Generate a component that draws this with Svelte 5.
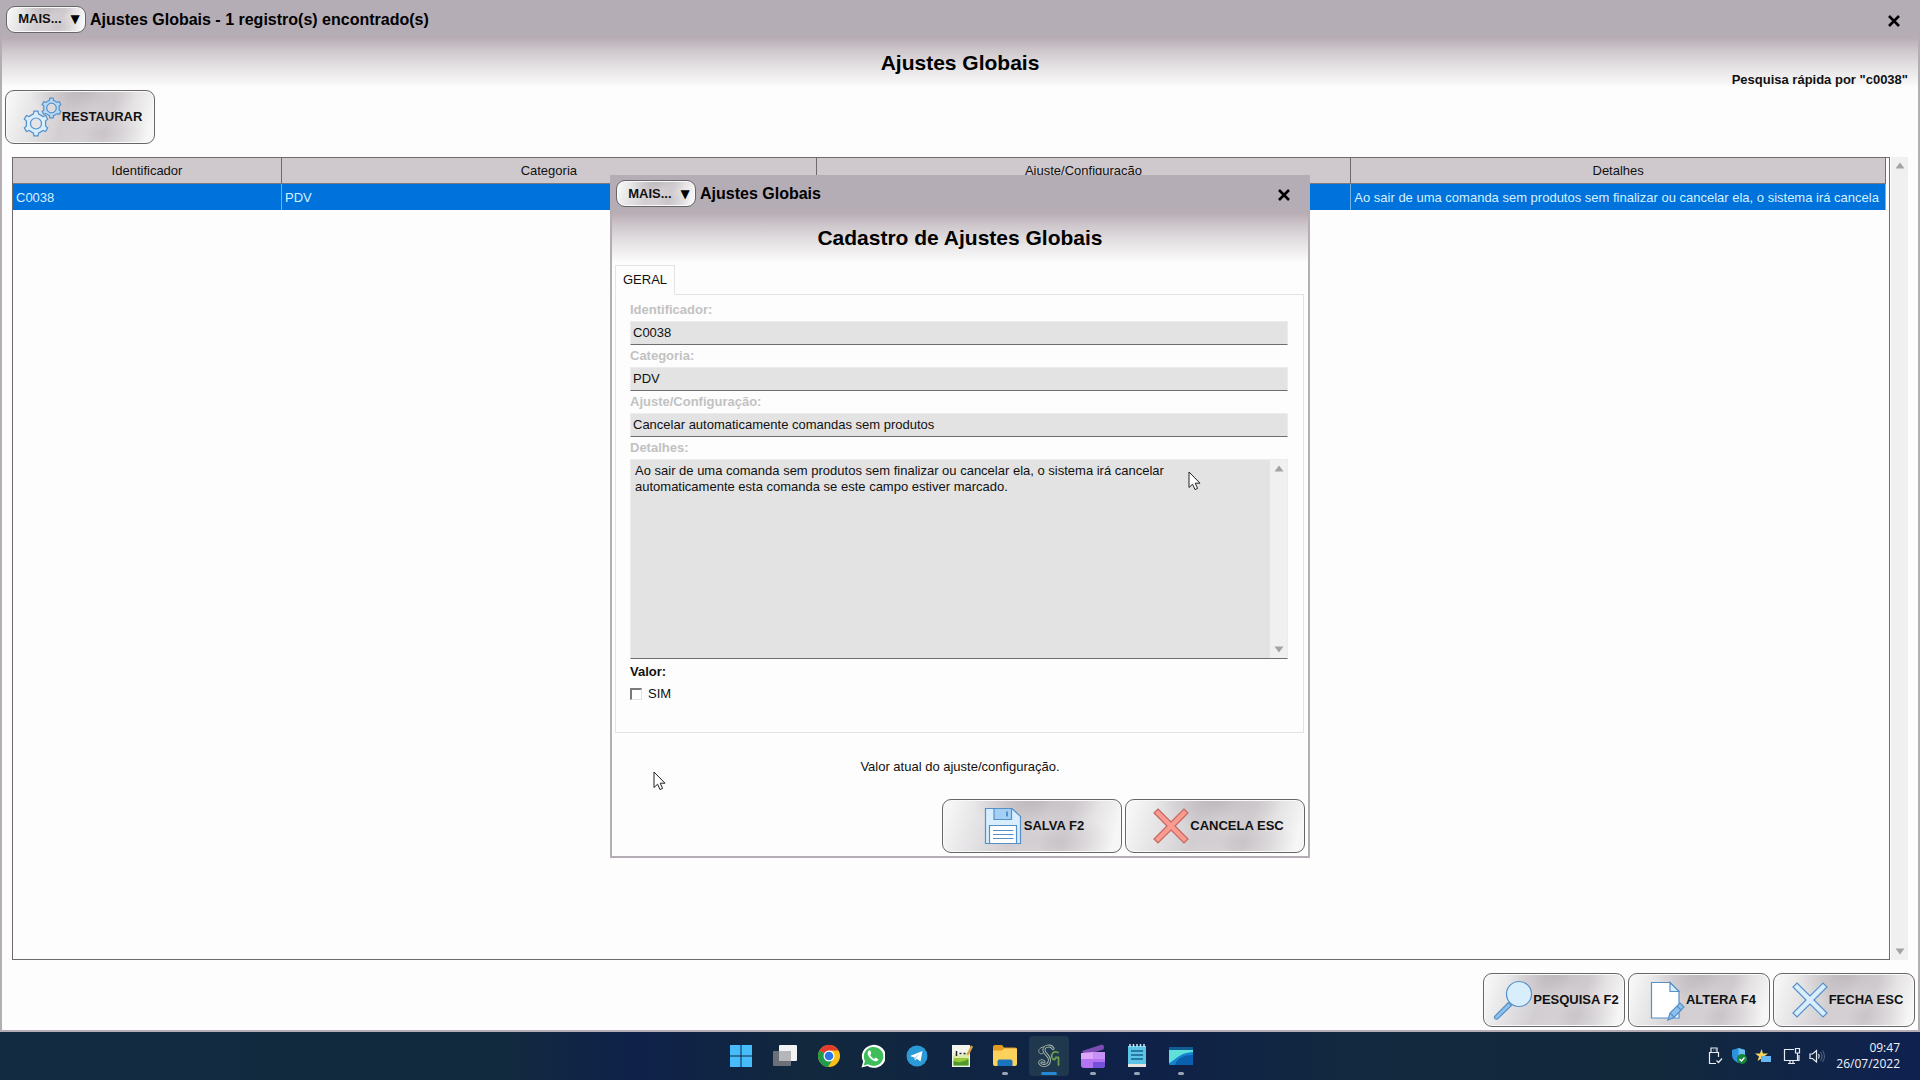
<script lang="ts">
  type Row = { id: string; category: string; setting: string; details: string };

  const columns = ['Identificador', 'Categoria', 'Ajuste/Configuração', 'Detalhes'];

  const rows: Row[] = [
    {
      id: 'C0038',
      category: 'PDV',
      setting: 'Cancelar automaticamente comandas sem produtos',
      details: 'Ao sair de uma comanda sem produtos sem finalizar ou cancelar ela, o sistema irá cancela'
    }
  ];

  const fullDetails =
    'Ao sair de uma comanda sem produtos sem finalizar ou cancelar ela, o sistema irá cancelar automaticamente esta comanda se este campo estiver marcado.';

  const fields = [
    { id: 'identificador', label: 'Identificador:', value: rows[0].id },
    { id: 'categoria', label: 'Categoria:', value: rows[0].category },
    { id: 'ajuste', label: 'Ajuste/Configuração:', value: rows[0].setting }
  ];

  const apps = [
    { name: 'start', state: '' },
    { name: 'taskview', state: '' },
    { name: 'chrome', state: '' },
    { name: 'whatsapp', state: '' },
    { name: 'telegram', state: '' },
    { name: 'notepadpp', state: '' },
    { name: 'explorer', state: 'open' },
    { name: 'sg', state: 'active' },
    { name: 'clipchamp', state: 'open' },
    { name: 'notepad', state: 'open' },
    { name: 'desktop', state: 'open' }
  ];

  let checked = $state(false);

  // outline of a cog: four points per tooth
  function gear(cx: number, cy: number, outer: number, inner: number, teeth = 6) {
    const step = (Math.PI * 2) / teeth;
    const points: string[] = [];
    for (let i = 0; i < teeth; i++) {
      const a = i * step - Math.PI / 2;
      for (const [r, off] of [
        [inner, -0.24],
        [outer, -0.16],
        [outer, 0.16],
        [inner, 0.24]
      ]) {
        const t = a + off * step;
        points.push(`${(cx + r * Math.cos(t)).toFixed(2)} ${(cy + r * Math.sin(t)).toFixed(2)}`);
      }
    }
    return `M${points.join('L')}Z`;
  }
</script>

{#snippet titlebar(title: string)}
  <div class="titlebar">
    <button class="glossy more">MAIS...<span class="caret">▼</span></button>
    <span class="caption">{title}</span>
    <button class="close" aria-label="Fechar">
      <svg width="12" height="12" viewBox="0 0 12 12"><path d="M1 1L11 11M11 1L1 11" stroke="#000" stroke-width="2.6" /></svg>
    </button>
  </div>
{/snippet}

{#snippet scrollbar()}
  <div class="scrollbar">
    <svg width="10" height="7" viewBox="0 0 10 7"><path d="M5 0.5L9.5 6.5H0.5Z" fill="#a3a3a3" /></svg>
    <svg width="10" height="7" viewBox="0 0 10 7"><path d="M5 6.5L9.5 0.5H0.5Z" fill="#a3a3a3" /></svg>
  </div>
{/snippet}

{#snippet cursor(place: string)}
  <svg class="cursor {place}" width="13" height="20" viewBox="0 0 13 20">
    <path d="M1 1V16.5L4.6 13.2L7 18.6L9.6 17.4L7.2 12.2H12Z" fill="#fff" stroke="#222" />
  </svg>
{/snippet}

{#snippet buttonIcon(name: string)}
  <svg class="icon" width="44" height="44" viewBox="0 0 44 44" stroke="#5590c8" stroke-width="1.2" fill="#d9eefc">
    {#if name === 'gears'}
      <path d={gear(33.5, 13, 10, 8)} fill="#b5daf8" />
      <circle cx="33.5" cy="13" r="4.8" fill="#dcdadd" />
      <path d={gear(18, 28.5, 12.5, 10)} />
      <circle cx="18" cy="28.5" r="5.5" fill="#e6e4e6" />
    {:else if name === 'save'}
      <path d="M5.5 4.5H32L40.500 12.5V39.5H5.5Z" />
      <path d="M14 4.5H31.500V15.5H14Z" fill="#a4d0f6" />
      <path d="M27 7.5V12.5" stroke-width="2" />
      <path d="M9.500 39.5V21.5H36.500V39.5Z" fill="#fff" />
      <path d="M13 26.5H33.500M13 30.5H33.500M13 34.5H33.500" />
    {:else if name === 'cancel'}
      <path
        d="M12 5L25 18L38 5L42 9L29 22L42 35L38 39L25 26L12 39L8 35L21 22L8 9Z"
        fill="#fa9a90"
        stroke="#c4675f"
      />
    {:else if name === 'search'}
      <path d="M19.5 24.5L5.5 38.5Q5 41.5 8.5 41L22.5 27.5Z" fill="#8fc0ec" />
      <circle cx="30" cy="16" r="12.5" />
    {:else if name === 'edit'}
      <path d="M9.5 4.5H28L37 13.5V40H9.5Z" fill="#fff" />
      <path d="M28 4.5V13.5H37Z" />
      <path d="M26 42L28 35L38 25L42 29L32 39.5Z" fill="#8fc0ec" />
      <path d="M28 35L32 39M35 28L39 32" fill="none" />
    {:else}
      <path d="M12 5L25 18L38 5L42 9L29 22L42 35L38 39L25 26L12 39L8 35L21 22L8 9Z" />
    {/if}
  </svg>
{/snippet}

{#snippet appIcon(name: string)}
  <svg width="24" height="24" viewBox="0 0 24 24">
    {#if name === 'start'}
      <path d="M1 1H11.5V11.5H1ZM12.5 1H23V11.5H12.5ZM1 12.5H11.5V23H1ZM12.5 12.5H23V23H12.5Z" fill="#46bdfa" />
    {:else if name === 'taskview'}
      <rect x="6" y="1" width="18" height="16" rx="1" fill="#f2f2f4" />
      <rect x="0" y="7" width="18" height="15" rx="1" fill="#6b7078" />
      <rect x="6" y="7" width="12" height="10" fill="#b5b6ba" />
    {:else if name === 'chrome'}
      <circle cx="12" cy="12" r="11" fill="#fbc116" />
      <path d="M12 12L2.5 6.5A11 11 0 0 1 21.5 6.5H12Z" fill="#e33b2e" />
      <path d="M12 12L2.5 6.5A11 11 0 0 0 11 23L16 15Z" fill="#229a4b" />
      <circle cx="12" cy="12" r="5.5" fill="#fff" />
      <circle cx="12" cy="12" r="4.3" fill="#2b75e8" />
    {:else if name === 'whatsapp'}
      <path d="M0.5 23.5L2.2 17.6A12 11.5 0 1 1 6.4 22Z" fill="#fff" />
      <path d="M2.6 21.5L4 17A9.8 9.5 0 1 1 7 20.2Z" fill="#3fbd5b" />
      <path d="M8 6.5C5.5 8.5 7 12 9.5 14.5C12.5 17.5 16 18.5 17.5 15.5L14.8 13.6L13.2 15C11.5 14.3 10 12.7 9.3 11L10.3 9.5L9.3 6.5Z" fill="#fff" />
    {:else if name === 'telegram'}
      <circle cx="12" cy="12" r="10.5" fill="#2a9ad8" />
      <path d="M5 12L17.5 7L15.5 17.5L11.8 14.8L10 16.5L9.5 13.5Z" fill="#fff" />
      <path d="M9.5 13.5L15 9.2L11 14.2L10 16.5Z" fill="#b5d5e8" />
    {:else if name === 'notepadpp'}
      <path d="M3 1H21V23H3Z" fill="#f4f6ee" />
      <path d="M4.5 12H19.5V21.5H4.5Z" fill="#9cc93c" />
      <path d="M4.5 9Q12 15 19.5 7V14H4.5Z" fill="#dcebaa" />
      <path d="M4.5 17Q12 20 19.5 15V21.5H4.5Z" fill="#4f9a2c" />
      <path d="M7.5 7V12M10.5 9.5H12.5M14.5 9.5H16.5" stroke="#222" stroke-width="1.5" />
      <path d="M23 2L18.5 11" stroke="#d9a44a" stroke-width="2.5" />
    {:else if name === 'explorer'}
      <path d="M0 3Q0 1 2 1H9L11 3.5H22Q24 3.5 24 5.5V12H0Z" fill="#e39a22" />
      <path d="M0 6.5H9L11 4.5H24V20Q24 22 22 22H2Q0 22 0 20Z" fill="#fdd25c" />
      <path d="M4.5 22V17.5Q4.5 15.5 6.5 15.5H17.5Q19.500 15.5 19.5 17.5V22Z" fill="#1b72bd" />
    {:else if name === 'sg'}
      <g fill="none" stroke-linecap="round" stroke-linejoin="round">
        <path d="M16 4.5C14 0.500 6.500 1.500 7 6.500C7.500 10.500 13 11.500 12.500 16.500C12 22 5 23 3 19.500C2 17 5.500 15.500 7 18" stroke="#a9b8ae" stroke-width="3" />
        <path d="M16 4.5C14 0.500 6.500 1.500 7 6.500C7.500 10.500 13 11.500 12.500 16.500C12 22 5 23 3 19.500C2 17 5.500 15.500 7 18" stroke="#20384e" stroke-width="1.200" />
        <path d="M6 3C2.500 3.500 0.500 7 2.500 9C4 10.500 6 10 6.500 8.500" stroke="#93a59c" />
        <path d="M21 8.500C16.500 6.500 14 10 15 13.500C16 16.500 18.500 16 18.500 13.500H21.500V21" stroke="#6a9c50" stroke-width="1.800" />
      </g>
    {:else if name === 'clipchamp'}
      <path d="M1 7L21 0.5Q23 0.5 23 3L22.5 5.5L4 11Z" fill="#7d4cb5" />
      <path d="M0 9H24V21Q24 24 21 24H3Q0 24 0 21Z" fill="#b473f0" />
      <path d="M0 9L12 8V15H0Z" fill="#dca6fa" />
      <path d="M12 8H24V15H12Z" fill="#c690f6" />
      <path d="M12 18H24V21Q24 24 21 24H12Z" fill="#7550dd" />
    {:else if name === 'notepad'}
      <path d="M3 2H21V20H3Z" fill="#5cc4e6" />
      <path d="M3 20H21V23H3Z" fill="#e9e4df" />
      <path d="M5 0V3M8.5 0V3M12 0V3M15.5 0V3M19 0V3" stroke="#c9edf7" stroke-width="1.5" />
      <path d="M6 7H18M6 11H18M6 15H18" stroke="#16628f" stroke-width="1.5" />
    {:else}
      <rect x="0" y="3" width="24" height="18" rx="1.5" fill="#1583cf" />
      <path d="M0 19C6 17 9 9 24 8V6H0Z" fill="#5fe0da" />
      <path d="M6 21C8 14 15 11 24 11V21Z" fill="#0a5fae" />
      <rect x="0" y="3" width="24" height="3" rx="1" fill="#0f5f94" />
    {/if}
  </svg>
{/snippet}

<div class="screen">
  <main class="window">
    <header class="head">
      {@render titlebar('Ajustes Globais - 1 registro(s) encontrado(s)')}
      <div class="heading">
        <h1>Ajustes Globais</h1>
        <span class="quick">Pesquisa rápida por "c0038"</span>
      </div>
    </header>

    <div class="toolbar">
      <button class="glossy wide">{@render buttonIcon('gears')}RESTAURAR</button>
    </div>

    <section class="grid-area">
      <div class="frame">
        <table>
          <colgroup>
            <col class="narrow" /><col /><col /><col />
          </colgroup>
          <thead>
            <tr>
              {#each columns as column}
                <th>{column}</th>
              {/each}
            </tr>
          </thead>
          <tbody>
            {#each rows as row}
              <tr>
                <td>{row.id}</td>
                <td>{row.category}</td>
                <td>{row.setting}</td>
                <td>{row.details}</td>
              </tr>
            {/each}
          </tbody>
        </table>
      </div>
      {@render scrollbar()}
    </section>

    <footer class="actions">
      <button class="glossy">{@render buttonIcon('search')}PESQUISA F2</button>
      <button class="glossy">{@render buttonIcon('edit')}ALTERA F4</button>
      <button class="glossy">{@render buttonIcon('close')}FECHA ESC</button>
    </footer>

    <div class="overlay">
      <div class="dialog" role="dialog" aria-labelledby="dialog-title">
        <header class="head">
          {@render titlebar('Ajustes Globais')}
          <div class="heading"><h1 id="dialog-title">Cadastro de Ajustes Globais</h1></div>
        </header>

        <div class="tabs">
          <button class="tab">GERAL</button>
        </div>
        <div class="panel">
          {#each fields as field}
            <label class="disabled" for={field.id}>{field.label}</label>
            <input class="box" id={field.id} type="text" value={field.value} readonly />
          {/each}
          <label class="disabled" for="detalhes">Detalhes:</label>
          <div class="box memo">
            <textarea id="detalhes" readonly value={fullDetails}></textarea>
            {@render scrollbar()}
          </div>
          <span class="label">Valor:</span>
          <label class="check"><input type="checkbox" bind:checked />SIM</label>
        </div>

        <p class="hint">Valor atual do ajuste/configuração.</p>

        <footer class="actions">
          <button class="glossy large">{@render buttonIcon('save')}SALVA F2</button>
          <button class="glossy large">{@render buttonIcon('cancel')}CANCELA ESC</button>
        </footer>

        {@render cursor('in-memo')}
        {@render cursor('in-footer')}
      </div>
    </div>
  </main>

  <nav class="taskbar">
    <div class="apps">
      {#each apps as app}
        <button class="app {app.state}" aria-label={app.name}>{@render appIcon(app.name)}</button>
      {/each}
    </div>
    <div class="tray">
      <svg width="16" height="18" viewBox="0 0 16 18" fill="none" stroke="#e8ecf2" stroke-width="1.2">
        <path d="M4 5V1H10V5M11.5 10V5.5H2.5V16.5H9M6 3H6.5M8 3H8.5" />
        <path d="M9.5 13.5L11.5 15.5L15 11.5" />
      </svg>
      <svg width="16" height="18" viewBox="0 0 16 18">
        <path d="M7.5 1L14 3V8C14 12 11 14.5 7.5 16C4 14.5 1 12 1 8V3Z" fill="#2a93dd" />
        <path d="M7.5 1L14 3V8H7.5Z" fill="#67bdf0" />
        <circle cx="11" cy="12" r="5" fill="#16843a" />
        <path d="M8.5 12L10.5 14L13.5 10.5" fill="none" stroke="#fff" stroke-width="1.3" />
      </svg>
      <svg width="16" height="18" viewBox="0 0 16 18">
        <path d="M6.5 2L8 6.5H13L9 9.5L10.5 14L6.5 11.5L2.5 14L4 9.5L0 6.5H5Z" fill="#f6d560" />
        <rect x="6" y="9" width="10" height="6" fill="#66b6f3" />
      </svg>
      <svg class="network" width="18" height="18" viewBox="0 0 18 18" fill="none" stroke="#e8ecf2" stroke-width="1.2">
        <path d="M11 2.5H1.5V13.5H16V8M5 16.5H12M7 13.5V16.5M10 13.5V16.5M12.5 1.5H16.5V6H12.5ZM14.5 6V13" />
      </svg>
      <svg width="17" height="18" viewBox="0 0 17 18" fill="none" stroke="#e8ecf2" stroke-width="1.2">
        <path d="M1 7V11.5H3.5L7.5 15V3.5L3.5 7Z" />
        <path d="M9.5 7Q11 9.25 9.5 11.5" />
        <path d="M11.5 5Q14.5 9.25 11.5 13.5M13.5 3.5Q17.5 9.25 13.5 15" stroke="#4b5a7a" />
      </svg>
      <div class="clock"><span>09:47</span><span>26/07/2022</span></div>
    </div>
  </nav>
</div>

<style>
  :global(body) {
    margin: 0;
  }

  .screen {
    display: flex;
    flex-direction: column;
    min-height: 100vh;
    font-family: 'Liberation Sans', Arial, sans-serif;
    font-size: 13px;
    line-height: 16px;
    color: #111;
  }

  .screen *,
  .screen *::before {
    box-sizing: border-box;
  }

  button,
  input,
  textarea {
    font: inherit;
    color: inherit;
    margin: 0;
  }

  svg {
    display: block;
    flex: none;
  }

  /* Window frame, shared by the main window and the dialog */
  .window,
  .dialog {
    position: relative;
    display: flex;
    flex-direction: column;
    background: #fdfdfd;
    border: 2px solid #b4adb3;
    border-top: 0;
  }

  .window {
    flex: 1;
  }

  .head {
    margin-bottom: 4px;
    background: linear-gradient(#b5adb5 0, #b5adb5 32px, #b9adb5 38px, #cdc6cb 50px, #e3e0e2 66px, #fdfdfd 88px);
  }

  .titlebar {
    display: flex;
    align-items: center;
    height: 38px;
    padding: 0 16px 0 4px;
  }

  .caption {
    flex: 1;
    padding: 1px 0 0 4px;
    font-size: 16px;
    font-weight: bold;
    color: #000;
  }

  .close {
    padding: 3px 2px 0 0;
    border: 0;
    background: none;
  }

  .heading {
    display: grid;
    grid-template-columns: 1fr auto 1fr;
    height: 50px;
    margin-bottom: -2px;
    padding: 0 10px;
  }

  h1 {
    grid-column: 2;
    align-self: center;
    margin: 0;
    font-size: 21px;
    line-height: 24px;
    font-weight: bold;
    color: #000;
  }

  .quick {
    align-self: end;
    justify-self: end;
    font-weight: bold;
  }

  .glossy {
    display: flex;
    align-items: center;
    justify-content: center;
    width: 142px;
    height: 54px;
    padding: 0;
    border: 1px solid #666;
    border-radius: 9px;
    box-shadow: inset 0 0 0 1px #fafafa;
    font-weight: bold;
    white-space: nowrap;
    background:
      radial-gradient(ellipse 36% 60% at 52% 0, rgba(180, 173, 178, 0.7), rgba(180, 173, 178, 0)),
      radial-gradient(ellipse 32% 50% at 64% 80%, rgba(188, 182, 187, 0.5), rgba(188, 182, 187, 0)),
      linear-gradient(108deg, #f6f6f6 4%, #e2e0e2 24%, #d3cfd2 40%, #dedbdd 56%, #d6d2d5 68%, #f6f6f6 94%);
  }

  .glossy.wide {
    width: 150px;
  }

  .glossy.large {
    width: 180px;
  }

  .glossy.more {
    width: 80px;
    height: 27px;
    gap: 9px;
    padding-left: 6px;
  }

  .caret {
    font-family: 'DejaVu Sans', sans-serif;
    font-size: 12px;
    color: #000;
  }

  .toolbar {
    display: flex;
    padding: 0 3px;
  }

  .grid-area {
    flex: 1;
    display: flex;
    gap: 1px;
    margin: 13px 10px;
  }

  .frame {
    flex: 1;
    min-width: 0;
    padding-right: 3px;
    border: 1px solid #6e6a6e;
  }

  table {
    width: 100%;
    table-layout: fixed;
    border-collapse: separate;
    border-spacing: 0;
  }

  .narrow {
    width: 269px;
  }

  th,
  td {
    height: 26px;
    padding: 1px 3px 0;
    overflow: hidden;
    white-space: nowrap;
    font-weight: normal;
  }

  th {
    background: #cfc9cd;
    border-right: 1px solid #6e6a6e;
    border-bottom: 1px solid #7c787c;
    text-align: center;
  }

  td {
    background: #0072dc;
    border-right: 1px solid #6fb4ea;
    color: #d4f0ff;
  }

  .scrollbar {
    display: flex;
    flex-direction: column;
    align-items: center;
    justify-content: space-between;
    width: 17px;
    padding: 5px 0;
    background: #f0f0f0;
  }

  .actions {
    display: flex;
    justify-content: flex-end;
    gap: 3px;
    padding: 0 3px 3px;
  }

  .overlay {
    position: absolute;
    inset: 0 0 -2px;
    display: flex;
    align-items: center;
    justify-content: center;
  }

  .dialog {
    width: 700px;
  }

  .tabs {
    display: flex;
    padding-left: 3px;
  }

  .tab {
    height: 30px;
    margin-bottom: -1px;
    padding: 0 7px;
    border: 1px solid #e3e3e3;
    border-bottom-color: #fdfdfd;
    background: #fdfdfd;
    z-index: 1;
  }

  .panel {
    display: flex;
    flex-direction: column;
    margin: 0 4px 0 3px;
    padding: 4px 15px 27px 14px;
    border: 1px solid #e3e3e3;
  }

  .panel label.disabled {
    height: 22px;
    line-height: 22px;
    font-weight: bold;
    color: #c2c2c2;
  }

  .label {
    height: 24px;
    line-height: 26px;
    font-weight: bold;
  }

  .box {
    height: 24px;
    padding: 0 2px;
    border: 1px solid #ececec;
    border-bottom-color: #6e6e6e;
    border-radius: 0;
    background: #e3e3e3;
    outline: 0;
  }

  .memo {
    display: flex;
    height: 200px;
    padding: 0;
  }

  textarea {
    flex: 1;
    padding: 3px 8px 3px 4px;
    border: 0;
    outline: 0;
    resize: none;
    overflow: hidden;
    background: transparent;
  }

  .check {
    display: flex;
    align-items: center;
    gap: 6px;
    height: 22px;
  }

  .check input {
    appearance: none;
    width: 12px;
    height: 12px;
    border: 1px solid #e3e3e3;
    border-top: 2px solid #7a7a7a;
    border-left: 2px solid #7a7a7a;
    background: #fff;
  }

  .hint {
    margin: 26px 0 24px;
    text-align: center;
  }

  .cursor {
    position: absolute;
  }

  .in-memo {
    left: 576px;
    top: 296px;
  }

  .in-footer {
    left: 41px;
    top: 596px;
  }

  .taskbar {
    display: grid;
    grid-template-columns: 1fr auto 1fr;
    align-items: center;
    height: 48px;
    background: linear-gradient(90deg, #122b40 0, #122a3e 26%, #0f214a 33%, #11283d 42%, #0f2148 60%, #12293f 70%, #12293c 86%, #0f2150 100%);
  }

  .apps {
    grid-column: 2;
    display: flex;
    gap: 4px;
    padding-left: 2px;
  }

  .app {
    position: relative;
    display: flex;
    align-items: center;
    justify-content: center;
    width: 40px;
    height: 40px;
    padding: 0;
    border: 0;
    border-radius: 4px;
    background: none;
  }

  .app.active {
    background: #20384e;
  }

  .app.open::before,
  .app.active::before {
    content: '';
    position: absolute;
    bottom: 1px;
    left: 17px;
    width: 6px;
    height: 3px;
    border-radius: 2px;
    background: #98a5b5;
  }

  .app.active::before {
    left: 12px;
    width: 16px;
    background: #2588d6;
  }

  .tray {
    display: flex;
    align-items: center;
    justify-content: flex-end;
    gap: 8px;
    padding-right: 20px;
  }

  .network {
    margin-left: 4px;
  }

  .clock {
    display: flex;
    flex-direction: column;
    width: 66px;
    text-align: right;
    font-family: 'Open Sans', sans-serif;
    font-size: 12px;
    color: #f2f4f8;
  }
</style>
